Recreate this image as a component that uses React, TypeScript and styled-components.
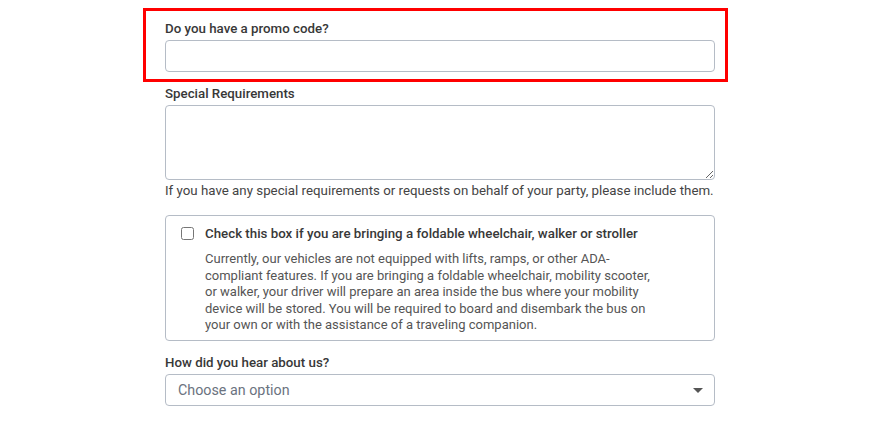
import styled, { createGlobalStyle } from "styled-components";

const GlobalStyle = createGlobalStyle`
  html, body {
    margin: 0;
    padding: 0;
    background: #fff;
  }
  body {
    font-family: Roboto, "Liberation Sans", Arial, sans-serif;
    color: #333;
  }
  * {
    box-sizing: border-box;
  }
`;

const Page = styled.div`
  padding: 8px 0 0 165px;
  width: 878px;
  height: 427px;
  overflow: hidden;
`;

const Column = styled.div`
  width: 550px;
  display: flex;
  flex-direction: column;
`;

const Highlight = styled.div`
  margin-left: -22px;
  width: 585px;
  border: 3px solid #ff0000;
  padding: 10px 10px 7px 19px;
`;

const Field = styled.div<{ mt?: number }>`
  display: flex;
  flex-direction: column;
  margin-top: ${(p) => p.mt ?? 0}px;
`;

const Label = styled.label`
  font-size: 13.3px;
  font-weight: 500;
  line-height: 16px;
  color: #383838;
  margin-bottom: 3px;
`;

const TextInput = styled.input`
  width: 550px;
  height: 32px;
  border: 1px solid #b5bcc6;
  border-radius: 4px;
  padding: 0 12px;
  font: inherit;
  outline: none;
`;

const TextArea = styled.textarea`
  width: 550px;
  height: 75px;
  border: 1px solid #b5bcc6;
  border-radius: 4px;
  padding: 6px 12px;
  font: inherit;
  resize: vertical;
  outline: none;
  display: block;
`;

const Help = styled.p`
  margin: 3px 0 0;
  font-size: 13.3px;
  line-height: 16px;
  color: #444;
`;

const Card = styled.div`
  margin-top: 16px;
  height: 126px;
  border: 1px solid #b5bcc6;
  border-radius: 4px;
  padding: 10px 16px 0 15px;
  display: flex;
  gap: 11px;
`;

const Check = styled.input`
  margin: 1px 0 0;
  width: 13px;
  height: 13px;
  flex: none;
`;

const CardBody = styled.div`
  display: flex;
  flex-direction: column;
  width: 458px;
`;

const CheckLabel = styled.label`
  font-size: 13.3px;
  font-weight: 500;
  line-height: 16px;
  color: #383838;
`;

const Note = styled.p`
  margin: 9px 0 0;
  font-size: 13px;
  line-height: 16.6px;
  color: #555;
`;

const SelectWrap = styled.div`
  position: relative;
  width: 550px;
  height: 32px;
`;

const Select = styled.select`
  width: 100%;
  height: 100%;
  appearance: none;
  border: 1px solid #b5bcc6;
  border-radius: 4px;
  background: #fff;
  padding: 0 12px;
  font-family: inherit;
  font-size: 14.3px;
  color: #6b7380;
  outline: none;
`;

const Caret = styled.span`
  position: absolute;
  right: 12px;
  top: 14px;
  width: 0;
  height: 0;
  border-left: 5px solid transparent;
  border-right: 5px solid transparent;
  border-top: 5px solid #555;
  pointer-events: none;
`;

export default function App() {
  return (
    <>
      <GlobalStyle />
      <Page>
        <Column>
          <Highlight>
            <Field>
              <Label htmlFor="promo">Do you have a promo code?</Label>
              <TextInput id="promo" type="text" />
            </Field>
          </Highlight>

          <Field mt={4}>
            <Label htmlFor="special">Special Requirements</Label>
            <TextArea id="special" />
            <Help>
              If you have any special requirements or requests on behalf of your party, please include them.
            </Help>
          </Field>

          <Card>
            <Check type="checkbox" id="wheelchair" />
            <CardBody>
              <CheckLabel htmlFor="wheelchair">
                Check this box if you are bringing a foldable wheelchair, walker or stroller
              </CheckLabel>
              <Note>
                Currently, our vehicles are not equipped with lifts, ramps, or other ADA-compliant features. If you
                are bringing a foldable wheelchair, mobility scooter, or walker, your driver will prepare an area
                inside the bus where your mobility device will be stored. You will be required to board and disembark
                the bus on your own or with the assistance of a traveling companion.
              </Note>
            </CardBody>
          </Card>

          <Field mt={14}>
            <Label htmlFor="hear">How did you hear about us?</Label>
            <SelectWrap>
              <Select id="hear" defaultValue="">
                <option value="" disabled>
                  Choose an option
                </option>
              </Select>
              <Caret />
            </SelectWrap>
          </Field>
        </Column>
      </Page>
    </>
  );
}
